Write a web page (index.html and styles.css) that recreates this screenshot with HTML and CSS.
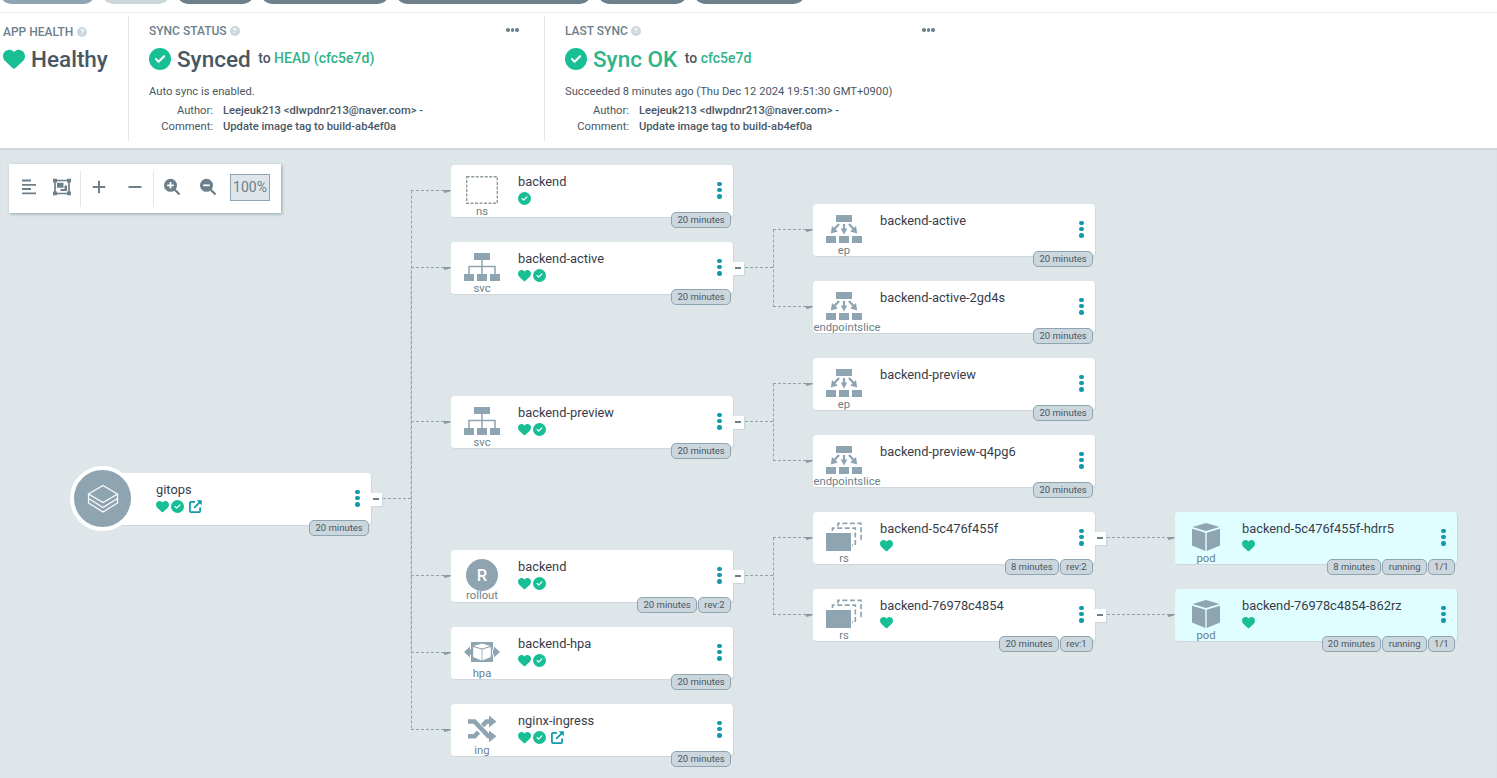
FILE: index.html
```html
<!DOCTYPE html>
<html lang="en">
<head>
<meta charset="UTF-8" />
<meta name="viewport" content="width=device-width, initial-scale=1" />
<title>gitops</title>
<link rel="stylesheet" href="styles.css">
</head>
<body>

<!-- Icons shared by the panel and the tree -->
<svg class="sprite">
  <symbol id="heart" viewBox="0 0 512 512"><path d="M47.6 300.4L228.3 469.1c7.5 7 17.4 10.9 27.7 10.9s20.2-3.9 27.7-10.9L464.4 300.4c30.4-28.3 47.6-68 47.6-109.5v-5.8c0-69.9-50.5-129.5-119.4-141C347 36.5 300.6 51.4 268 84L256 96 244 84c-32.6-32.6-79-47.5-124.6-39.9C50.5 55.6 0 115.2 0 185.1v5.8c0 41.5 17.2 81.2 47.6 109.5z"/></symbol>
  <symbol id="check" viewBox="0 0 512 512"><path d="M256 512A256 256 0 1 0 256 0a256 256 0 1 0 0 512zM369 209L241 337c-9.4 9.4-24.6 9.4-33.9 0l-64-64c-9.4-9.4-9.4-24.6 0-33.9s24.6-9.4 33.9 0l47 47L335 175c9.4-9.4 24.6-9.4 33.9 0s9.4 24.6 0 33.9z"/></symbol>
  <symbol id="link" viewBox="0 0 14 14"><path d="M6.500 2H2.200Q1 2 1 3.200v8.600Q1 13 2.200 13h8.600q1.200 0 1.200-1.200V8M5.500 8.500L11.500 2.500" fill="none" stroke="currentColor" stroke-width="1.900"/><path d="M8.300 .3h5.400v5.400z"/></symbol>
  <symbol id="ns" viewBox="0 0 36 32"><path d="M2.700 2.700h30.600v26.600H2.700z" fill="none" stroke="#8f9ba1" stroke-width="1.400" stroke-dasharray="3 1.500"/></symbol>
  <symbol id="svc" viewBox="0 0 36 28"><path d="M10 0h16v7H10zM0 21h10v7H0zM13 21h10v7H13zM26 21h10v7H26z"/><path d="M18 7v14M5 21v-7.500h26V21" fill="none" stroke="currentColor" stroke-width="1.500"/></symbol>
  <symbol id="ep" viewBox="0 0 36 28"><path d="M10 0h16v7H10zM0 21h10v7H0zM13 21h10v7H13zM26 21h10v7H26zM14.700 13.500h6.600L18 19.500zM4.800 18.500l1.200-7.500 5.800 5.500zM31.200 18.500l-1.200-7.500-5.800 5.500z"/><path d="M18 9v7M13 9l-5 5.500M23 9l5 5.500" fill="none" stroke="currentColor" stroke-width="2.200"/></symbol>
  <symbol id="rs" viewBox="0 0 36 29"><path d="M0 10.500h25V28.500H0z"/><path d="M6.500 8.500V5.700h22.800v17H26M12 4V.9h23v16h-3" fill="none" stroke="currentColor" stroke-width="1.700" stroke-dasharray="5 2.500"/></symbol>
  <symbol id="pod" viewBox="-4 -2 36 32"><path d="M14 0l13.500 4L14 8 .5 4zM0 5.700l13.300 4V28L0 22.500zM28 5.700l-13.300 4V28L28 22.500z"/></symbol>
  <symbol id="hpa" viewBox="0 0 36 22"><path d="M7 1h22v20H7zM0 11l6-5.500v3h2v5H6v3zM36 11l-6-5.500v3h-2v5h2v3z"/><path class="cut" d="M18 2.600l8.300 2.300L18 7.400 9.700 4.900zM9.200 6l8.400 2.400v11L9.200 16zM26.800 6l-8.400 2.400v11l8.400-3.400z"/></symbol>
  <symbol id="ing" viewBox="-4 -2 36 32"><path d="M0 6.500h6.500l14 14.800H22M0 21.300h6.500l4-4.200M14.500 10.700l4-4.200H22" fill="none" stroke="currentColor" stroke-width="4.600"/><path d="M21 .6l7.500 5.900L21 12.400zM21 15.400l7.500 5.900L21 27.200z"/></symbol>
</svg>

<header class="actions">
  <span class="btn btn-muted btn-1"></span>
  <span class="btn btn-off btn-2"></span>
  <span class="btn btn-3"></span>
  <span class="btn btn-4"></span>
  <span class="btn btn-5"></span>
  <span class="btn btn-6"></span>
  <span class="btn btn-7"></span>
</header>

<section class="status">
  <div class="panel panel-health">
    <div class="label">APP HEALTH <i class="help">?</i></div>
    <div class="value"><svg class="icon"><use href="#heart"/></svg><span>Healthy</span></div>
  </div>
  <div class="panel panel-sync">
    <div class="label">SYNC STATUS <i class="help">?</i></div>
    <div class="more"><i></i><i></i><i></i></div>
    <div class="value"><svg class="icon"><use href="#check"/></svg><span>Synced</span><small>to <a>HEAD (cfc5e7d)</a></small></div>
    <p>Auto sync is enabled.</p>
    <dl>
      <dt>Author:</dt><dd>Leejeuk213 &lt;dlwpdnr213@naver.com&gt; -</dd>
      <dt>Comment:</dt><dd>Update image tag to build-ab4ef0a</dd>
    </dl>
  </div>
  <div class="panel panel-last">
    <div class="label">LAST SYNC <i class="help">?</i></div>
    <div class="more"><i></i><i></i><i></i></div>
    <div class="value ok"><svg class="icon"><use href="#check"/></svg><span>Sync OK</span><small>to <a>cfc5e7d</a></small></div>
    <p>Succeeded 8 minutes ago (Thu Dec 12 2024 19:51:30 GMT+0900)</p>
    <dl>
      <dt>Author:</dt><dd>Leejeuk213 &lt;dlwpdnr213@naver.com&gt; -</dd>
      <dt>Comment:</dt><dd>Update image tag to build-ab4ef0a</dd>
    </dl>
  </div>
</section>

<main class="tree">

  <div class="toolbar">
    <div class="group">
      <svg class="tool" viewBox="0 0 18 18"><path d="M2 2.500h9M2 6.800h14M2 11h9M2 15.300h14" stroke="currentColor" stroke-width="1.800"/></svg>
      <svg class="tool" viewBox="0 0 18 18"><path d="M2 2.500h14v13H2z" fill="none" stroke="currentColor" stroke-width="1.700"/><path d="M0 .8h4v3.700H0zM14 .8h4v3.700h-4zM0 13.500h4v3.700H0zM14 13.500h4v3.700h-4zM4 4.800h6.500v5H4zM11.500 7.500H14v5.500H7.500v-2h4z"/></svg>
    </div>
    <div class="group">
      <svg class="tool" viewBox="0 0 18 18"><path d="M9 2.700v12.600M2.700 9h12.600" stroke="currentColor" stroke-width="2"/></svg>
      <svg class="tool" viewBox="0 0 18 18"><path d="M2.500 9h13" stroke="currentColor" stroke-width="2"/></svg>
    </div>
    <div class="group">
      <svg class="tool" viewBox="0 0 18 18"><circle cx="7.500" cy="7.300" r="6.500"/><path d="M11.500 11.500l5 5" stroke="currentColor" stroke-width="2.300"/><path class="cut-line" d="M7.500 4v6.600M4.200 7.300h6.600"/></svg>
      <svg class="tool" viewBox="0 0 18 18"><circle cx="7.500" cy="7.300" r="6.500"/><path d="M11.500 11.500l5 5" stroke="currentColor" stroke-width="2.300"/><path class="cut-line" d="M4.200 7.300h6.600"/></svg>
      <span class="zoom">100%</span>
    </div>
  </div>

  <!-- Edges -->
  <svg class="edges" viewBox="0 0 1497 630">
    <path d="M383 350.500H411M411.500 42.500V581.500M411 42.500H450M411 119.500H450M411 273.500H450M411 427.500H450M411 504.500H450M411 581.500H450"/>
    <path class="trunk" d="M411 121V504"/>
    <path d="M745 119.500H773M773.500 81.500V158.500M773 81.500H812M773 158.500H812"/>
    <path d="M745 273.500H773M773.500 235.500V312.500M773 235.500H812M773 312.500H812"/>
    <path d="M745 427.500H773M773.500 389.500V466.500M773 389.500H812M773 466.500H812"/>
    <path d="M1107 389.500H1174M1107 466.500H1174"/>
    <g class="arrows">
      <path d="M443 42h8l-1 1.500-5.500 1.500zM443 119h8l-1 1.500-5.500 1.500zM443 273h8l-1 1.500-5.500 1.500zM443 427h8l-1 1.500-5.500 1.500zM443 504h8l-1 1.500-5.500 1.500zM443 581h8l-1 1.500-5.500 1.500z"/>
      <path d="M805 81h8l-1 1.500-5.500 1.500zM805 158h8l-1 1.500-5.500 1.500zM805 235h8l-1 1.500-5.500 1.500zM805 312h8l-1 1.500-5.500 1.500zM805 389h8l-1 1.500-5.500 1.500zM805 466h8l-1 1.500-5.500 1.500z"/>
      <path d="M1167 389h8l-1 1.500-5.500 1.500zM1167 466h8l-1 1.500-5.500 1.500z"/>
    </g>
  </svg>

  <!-- Application -->
  <div class="node app col-0 row-app">
    <div class="kind"><svg class="layers" viewBox="0 0 32 32"><path d="M16 2.500l14.500 8.500L16 19.500 1.500 11zM1.500 11v4.500l14.500 9 14.500-9V11M1.500 15.500V20L16 29l14.500-9v-4.500"/></svg></div>
    <div class="info"><b>gitops</b><div class="state"><svg><use href="#heart"/></svg><svg><use href="#check"/></svg><svg class="link"><use href="#link"/></svg></div></div>
    <div class="menu"><i></i><i></i><i></i></div><span class="toggle"></span>
    <div class="tags"><span>20 minutes</span></div>
  </div>

  <!-- Level 1 -->
  <div class="node col-1 row-1">
    <div class="kind"><svg><use href="#ns"/></svg><em>ns</em></div>
    <div class="info"><b>backend</b><div class="state"><svg><use href="#check"/></svg></div></div>
    <div class="menu"><i></i><i></i><i></i></div>
    <div class="tags"><span>20 minutes</span></div>
  </div>
  <div class="node col-1 row-2">
    <div class="kind"><svg><use href="#svc"/></svg><em>svc</em></div>
    <div class="info"><b>backend-active</b><div class="state"><svg><use href="#heart"/></svg><svg><use href="#check"/></svg></div></div>
    <div class="menu"><i></i><i></i><i></i></div><span class="toggle"></span>
    <div class="tags"><span>20 minutes</span></div>
  </div>
  <div class="node col-1 row-4">
    <div class="kind"><svg><use href="#svc"/></svg><em>svc</em></div>
    <div class="info"><b>backend-preview</b><div class="state"><svg><use href="#heart"/></svg><svg><use href="#check"/></svg></div></div>
    <div class="menu"><i></i><i></i><i></i></div><span class="toggle"></span>
    <div class="tags"><span>20 minutes</span></div>
  </div>
  <div class="node col-1 row-6">
    <div class="kind"><span class="letter">R</span><em>rollout</em></div>
    <div class="info"><b>backend</b><div class="state"><svg><use href="#heart"/></svg><svg><use href="#check"/></svg></div></div>
    <div class="menu"><i></i><i></i><i></i></div><span class="toggle"></span>
    <div class="tags"><span>20 minutes</span><span>rev:2</span></div>
  </div>
  <div class="node col-1 row-7">
    <div class="kind"><svg><use href="#hpa"/></svg><em>hpa</em></div>
    <div class="info"><b>backend-hpa</b><div class="state"><svg><use href="#heart"/></svg><svg><use href="#check"/></svg></div></div>
    <div class="menu"><i></i><i></i><i></i></div>
    <div class="tags"><span>20 minutes</span></div>
  </div>
  <div class="node col-1 row-8">
    <div class="kind"><svg><use href="#ing"/></svg><em>ing</em></div>
    <div class="info"><b>nginx-ingress</b><div class="state"><svg><use href="#heart"/></svg><svg><use href="#check"/></svg><svg class="link"><use href="#link"/></svg></div></div>
    <div class="menu"><i></i><i></i><i></i></div>
    <div class="tags"><span>20 minutes</span></div>
  </div>

  <!-- Level 2 -->
  <div class="node col-2 half-1">
    <div class="kind"><svg><use href="#ep"/></svg><em>ep</em></div>
    <div class="info"><b>backend-active</b></div>
    <div class="menu"><i></i><i></i><i></i></div>
    <div class="tags"><span>20 minutes</span></div>
  </div>
  <div class="node col-2 half-2">
    <div class="kind"><svg><use href="#ep"/></svg><em class="long">endpointslice</em></div>
    <div class="info"><b>backend-active-2gd4s</b></div>
    <div class="menu"><i></i><i></i><i></i></div>
    <div class="tags"><span>20 minutes</span></div>
  </div>
  <div class="node col-2 half-3">
    <div class="kind"><svg><use href="#ep"/></svg><em>ep</em></div>
    <div class="info"><b>backend-preview</b></div>
    <div class="menu"><i></i><i></i><i></i></div>
    <div class="tags"><span>20 minutes</span></div>
  </div>
  <div class="node col-2 half-4">
    <div class="kind"><svg><use href="#ep"/></svg><em class="long">endpointslice</em></div>
    <div class="info"><b>backend-preview-q4pg6</b></div>
    <div class="menu"><i></i><i></i><i></i></div>
    <div class="tags"><span>20 minutes</span></div>
  </div>
  <div class="node col-2 half-5">
    <div class="kind"><svg><use href="#rs"/></svg><em>rs</em></div>
    <div class="info"><b>backend-5c476f455f</b><div class="state"><svg><use href="#heart"/></svg></div></div>
    <div class="menu"><i></i><i></i><i></i></div><span class="toggle"></span>
    <div class="tags"><span>8 minutes</span><span>rev:2</span></div>
  </div>
  <div class="node col-2 half-6">
    <div class="kind"><svg><use href="#rs"/></svg><em>rs</em></div>
    <div class="info"><b>backend-76978c4854</b><div class="state"><svg><use href="#heart"/></svg></div></div>
    <div class="menu"><i></i><i></i><i></i></div><span class="toggle"></span>
    <div class="tags"><span>20 minutes</span><span>rev:1</span></div>
  </div>

  <!-- Pods -->
  <div class="node pod col-3 half-5">
    <div class="kind"><svg><use href="#pod"/></svg><em>pod</em></div>
    <div class="info"><b>backend-5c476f455f-hdrr5</b><div class="state"><svg><use href="#heart"/></svg></div></div>
    <div class="menu"><i></i><i></i><i></i></div>
    <div class="tags"><span>8 minutes</span><span>running</span><span>1/1</span></div>
  </div>
  <div class="node pod col-3 half-6">
    <div class="kind"><svg><use href="#pod"/></svg><em>pod</em></div>
    <div class="info"><b>backend-76978c4854-862rz</b><div class="state"><svg><use href="#heart"/></svg></div></div>
    <div class="menu"><i></i><i></i><i></i></div>
    <div class="tags"><span>20 minutes</span><span>running</span><span>1/1</span></div>
  </div>

</main>

</body>
</html>
```

FILE: styles.css
```css
* {
  box-sizing: border-box;
}
body {
  margin: 0;
  height: 778px;
  overflow: hidden;
  display: flex;
  flex-direction: column;
  font-family: Roboto, "Liberation Sans", sans-serif;
  color: #495763;
  background: #fff;
}
svg {
  display: block;
  fill: currentColor;
}
.sprite {
  display: none;
}

/* Action buttons */
.actions {
  flex: none;
  display: flex;
  align-items: flex-end;
  gap: 5px;
  height: 13px;
  padding-bottom: 8px;
  border-bottom: 1px solid #e8eeee;
}
.btn {
  flex: none;
  height: 26px;
  border-radius: 13px;
  background: #6d7f8b;
}
.btn-muted { background: #8fa4b1; }
.btn-off { background: #ccd6dd; }
.btn-1 { width: 97px; margin-left: -1px; }
.btn-2 { width: 70px; }
.btn-3 { width: 79px; }
.btn-4 { width: 130px; }
.btn-5 { width: 197px; }
.btn-6 { width: 91px; }
.btn-7 { width: 113px; }

/* Status panel */
.status {
  flex: none;
  display: flex;
  height: 135px;
  padding: 3px 0 7px;
}
.panel {
  position: relative;
  padding: 7px 20px 0;
  border-right: 1px solid #dee6eb;
}
.panel-health { width: 129px; padding: 8px 0 0 3px; }
.panel-sync,
.panel-last { width: 416px; }
.panel-last { border: 0; }
.label {
  display: flex;
  align-items: center;
  gap: 3px;
  height: 16px;
  font-size: 12px;
  font-weight: 500;
  color: #6d7f8b;
  white-space: nowrap;
}
.panel-health .label {
  gap: 4px;
}
.help {
  width: 10px;
  height: 10px;
  border-radius: 50%;
  background: #ccd6dd;
  color: #fff;
  font: 700 8px/10px Roboto, sans-serif;
  text-align: center;
}
.more {
  position: absolute;
  top: 12px;
  right: 25px;
  display: flex;
  gap: 1px;
}
.panel-last .more {
  right: 26px;
}
.more i {
  width: 3.6px;
  height: 3.6px;
  border-radius: 50%;
  background: #6d7f8b;
}
.value {
  display: flex;
  align-items: center;
  height: 40px;
  font-size: 22.5px;
  font-weight: 500;
  white-space: nowrap;
}
.panel-health .value {
  margin-top: -1px;
}
.value .icon {
  width: 22px;
  height: 22px;
  margin-right: 6px;
  color: #18be94;
}
.value small {
  margin: -2px 0 0 7.5px;
  font-size: 14px;
}
.value a,
.ok span {
  color: #2fb388;
}
.panel p {
  margin: 5px 0 0;
  font-size: 11.2px;
  line-height: 16px;
  white-space: nowrap;
}
dl {
  display: grid;
  grid-template-columns: 64px 1fr;
  column-gap: 10px;
  margin: 3px 0 0;
  font-size: 11.2px;
  line-height: 16px;
}
dt {
  text-align: right;
}
dd {
  margin: 0;
  font-weight: 500;
  white-space: nowrap;
}

/* Resource tree */
.tree {
  position: relative;
  flex: 1;
  background: #dee6e9;
  box-shadow: inset 0 2px 1px #ccd6dd;
}
.toolbar {
  position: absolute;
  top: 16px;
  left: 9px;
  display: flex;
  align-items: center;
  height: 49px;
  padding-right: 11px;
  background: #fff;
  box-shadow: 1px 1px 3px #8fa4b1;
  color: #6d7f8b;
}
.group {
  display: flex;
  align-items: center;
  gap: 18px;
  height: 36px;
  padding: 0 9px;
  border-left: 1px solid #dee6eb;
}
.group:first-child {
  gap: 15px;
  padding-left: 11px;
  border: 0;
}
.group:last-child {
  padding-right: 0;
}
.tool {
  width: 18px;
  height: 18px;
  margin-top: -4px;
}
.cut-line {
  stroke: #fff;
  stroke-width: 1.7;
}
.zoom {
  width: 40px;
  height: 27px;
  margin: -3px 0 0 -5px;
  border: 1px solid #8fa4b1;
  background: #dee6eb;
  font-size: 14px;
  line-height: 25px;
  text-align: center;
}
.edges {
  position: absolute;
  top: 0;
  left: 0;
  width: 1497px;
  height: 630px;
  fill: none;
  stroke: #93a4a8;
  stroke-dasharray: 3 2;
}
.trunk {
  stroke-dashoffset: 2;
  stroke-opacity: .6;
}
.arrows {
  fill: #8a9ba0;
  stroke: none;
}

.node {
  position: absolute;
  display: flex;
  width: 282px;
  height: 52px;
  border-radius: 4px;
  background: #fff;
  box-shadow: 1px 1px 1px #ccd6dd;
}
.pod { background: #e0fdff; }
.col-0 { left: 89px; }
.col-1 { left: 451px; }
.col-2 { left: 813px; }
.col-3 { left: 1175px; }
.row-1 { top: 17px; }
.row-2 { top: 94px; }
.row-4 { top: 248px; }
.row-app { top: 325px; }
.row-6 { top: 402px; }
.row-7 { top: 479px; }
.row-8 { top: 556px; }
.half-1 { top: 56px; }
.half-2 { top: 133px; }
.half-3 { top: 210px; }
.half-4 { top: 287px; }
.half-5 { top: 364px; }
.half-6 { top: 441px; }

.kind {
  display: flex;
  flex-direction: column;
  align-items: center;
  width: 62px;
  padding-top: 9px;
  color: #8fa4b1;
}
.kind svg {
  flex: none;
  width: 36px;
  height: 32px;
}
.kind em {
  margin-top: -1px;
  font-size: 11.25px;
  font-style: normal;
  line-height: 13px;
  color: #6d7f8b;
}
.kind .long {
  margin-left: 6px;
}
.kind .letter + em {
  margin-top: -2px;
}
.cut {
  fill: #fff;
}
.letter {
  flex: none;
  width: 32px;
  height: 32px;
  border-radius: 50%;
  background: #8fa4b1;
  color: #fff;
  font-size: 16.5px;
  font-weight: 500;
  line-height: 33px;
  text-align: center;
}
.app .kind {
  justify-content: center;
  width: 65px;
  height: 65px;
  margin: -7px 0 0 -19px;
  padding: 0;
  border: 4px solid #fff;
  border-radius: 50%;
  background: #8fa4b1;
}
.app .info {
  padding-left: 21px;
}
.app .layers {
  width: 32px;
  height: 32px;
  fill: none;
  stroke: #fff;
  stroke-width: 1.2;
}

.info {
  flex: 1;
  padding: 9px 0 0 5px;
}
.info b {
  display: block;
  font-size: 12.85px;
  font-weight: 400;
  line-height: 16px;
  color: #363c4a;
  white-space: nowrap;
}
.state {
  display: flex;
  gap: 2px;
  margin-top: 2px;
  color: #18be94;
}
.state svg {
  width: 13px;
  height: 13px;
}
.state .link {
  margin-left: 3px;
  color: #0e9aab;
}
.menu {
  display: flex;
  flex-direction: column;
  gap: 1.8px;
  width: 4px;
  margin: 16.5px 12px 0 0;
}
.menu i {
  width: 4.6px;
  height: 4.6px;
  border-radius: 50%;
  background: #0e9aab;
}
.toggle {
  position: absolute;
  top: 20px;
  right: -11px;
  display: flex;
  width: 11px;
  height: 13px;
  padding: 5px 0 0 2px;
  background: #fff;
  box-shadow: 1px 1px 1px #ccd6dd;
}
.toggle::before {
  content: "";
  width: 6px;
  height: 2px;
  background: #6d7f8b;
}
.tags {
  position: absolute;
  right: 2px;
  bottom: -11px;
  display: flex;
  gap: 1px;
}
.tags span {
  height: 16px;
  padding: 0 5.3px;
  border: 1px solid #8fa4b1;
  border-radius: 5px;
  background: #ccd6dd;
  font-size: 9.5px;
  line-height: 14px;
  white-space: nowrap;
}
```
